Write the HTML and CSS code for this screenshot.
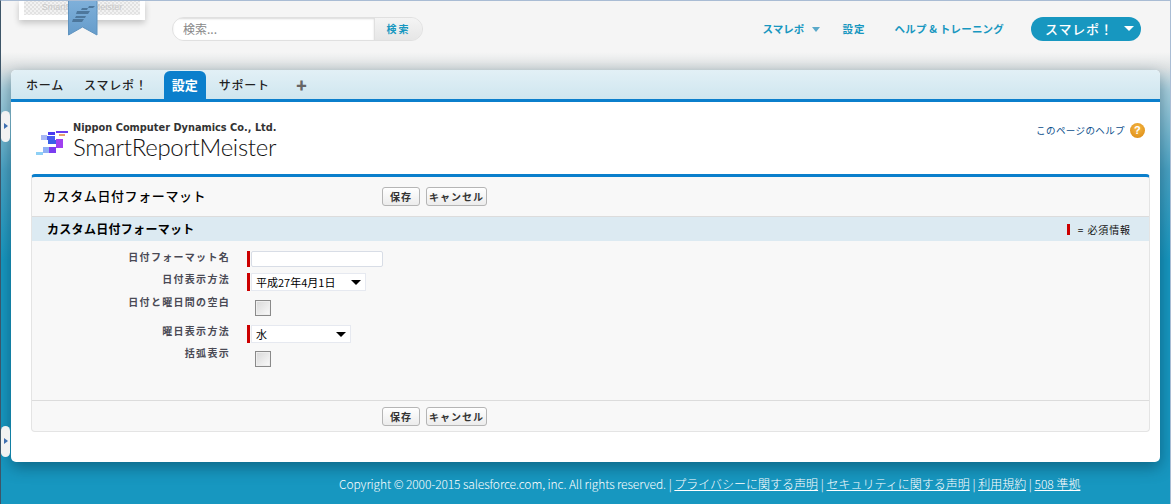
FILE: index.html
```html
<!DOCTYPE html>
<html lang="ja">
<head>
    <meta charset="UTF-8">
    <title>カスタム日付フォーマット</title>
    <link rel="stylesheet" href="styles.css">
</head>
<body>
    <header class="top">
        <div class="org-logo">
            <div class="org-card"><span>SmartReportMeister</span></div>
            <svg class="org-flag" width="30" height="36" viewBox="0 0 30 36">
                <defs>
                    <linearGradient id="flagFill" x1="0" y1="0" x2="0" y2="1">
                        <stop offset="0" stop-color="#7fb0da"/>
                        <stop offset="1" stop-color="#659ccb"/>
                    </linearGradient>
                </defs>
                <path d="M0.500 0V35L14.500 27L29 35V0Z" fill="url(#flagFill)" stroke="#5f93bf"/>
                <path d="M14 8H20L19 10H13ZM21 6H27L25 8H20ZM9 11H22L20 14H8ZM8 16H18L17 18H7ZM5 19H16L14 22H4Z" fill="#4d779c"/>
            </svg>
        </div>
        <form class="search">
            <input class="search-input" type="text" placeholder="検索...">
            <button class="search-btn" type="button">検索</button>
        </form>
        <nav class="top-links">
            <a href="#" class="link-smart">スマレポ <i class="caret"></i></a>
            <a href="#" class="link-setup">設定</a>
            <a href="#" class="link-help">ヘルプ &amp; トレーニング</a>
        </nav>
        <button class="app-menu" type="button"><span>スマレポ！</span><i class="caret caret-white"></i></button>
    </header>

    <!-- side handles -->
    <div class="handle handle-top"></div>
    <div class="handle handle-bottom"></div>

    <main class="panel">
        <nav class="tabs">
            <a href="#">ホーム</a>
            <a href="#">スマレポ！</a>
            <a href="#" class="active">設定</a>
            <a href="#">サポート</a>
            <a href="#" class="plus">✚</a>
        </nav>

        <div class="content">
            <div class="brand-row">
                <div class="brand">
                    <svg class="brand-mark" width="34" height="26" viewBox="0 0 34 26">
                        <rect x="12" y="2" width="7" height="3" fill="#4a3af0"/>
                        <rect x="20" y="1" width="12" height="2" fill="#6a3df0"/>
                        <rect x="23" y="4" width="6" height="2" fill="#e8a070"/>
                        <rect x="5" y="5" width="6" height="5" fill="#a8b8f5"/>
                        <rect x="11" y="6" width="8" height="4" fill="#4a5cf0"/>
                        <rect x="20" y="9" width="7" height="9" fill="#a040f0"/>
                        <rect x="12" y="10" width="8" height="4" fill="#3a60e8"/>
                        <rect x="7" y="17" width="6" height="6" fill="#8fb0f5"/>
                        <rect x="13" y="17" width="7" height="6" fill="#7a3df0"/>
                        <rect x="0" y="22" width="7" height="3" fill="#8ed0f5"/>
                    </svg>
                    <div class="brand-text">
                        <div class="brand-company">Nippon Computer Dynamics Co., Ltd.</div>
                        <div class="brand-name">SmartReportMeister</div>
                    </div>
                </div>
                <a href="#" class="page-help">このページのヘルプ <span class="help-icon">?</span></a>
            </div>

            <form class="edit-box">
                <div class="edit-head">
                    <h2>カスタム日付フォーマット</h2>
                    <div class="edit-btns">
                        <button type="button">保存</button>
                        <button type="button">キャンセル</button>
                    </div>
                </div>
                <div class="section-bar">
                    <h3>カスタム日付フォーマット</h3>
                    <span class="legend"><i class="req"></i>= 必須情報</span>
                </div>
                <div class="fields">
                    <div class="field">
                        <label>日付フォーマット名</label>
                        <i class="req"></i>
                        <input class="text-input" type="text">
                    </div>
                    <div class="field field-select">
                        <label>日付表示方法</label>
                        <i class="req"></i>
                        <div class="select select-date">平成27年4月1日</div>
                    </div>
                    <div class="field field-check">
                        <label>日付と曜日間の空白</label>
                        <span class="check"></span>
                    </div>
                    <div class="field field-select field-gap">
                        <label>曜日表示方法</label>
                        <i class="req"></i>
                        <div class="select select-day">水</div>
                    </div>
                    <div class="field field-check">
                        <label>括弧表示</label>
                        <span class="check"></span>
                    </div>
                </div>
                <div class="edit-foot">
                    <div class="edit-btns">
                        <button type="button">保存</button>
                        <button type="button">キャンセル</button>
                    </div>
                </div>
            </form>
        </div>
    </main>

    <footer class="foot">
        <span class="foot-copy">Copyright © 2000-2015 salesforce.com, inc. All rights reserved.</span> |
        <a href="#">プライバシーに関する声明</a> |
        <a href="#">セキュリティに関する声明</a> |
        <a href="#">利用規約</a> |
        <a href="#">508 準拠</a>
    </footer>
</body>
</html>
```

FILE: styles.css
```css
* {
    box-sizing: border-box;
}
html, body {
    height: 100%;
}
body {
    margin: 0;
    height: 504px;
    overflow: hidden;
    position: relative;
    font-family: "Liberation Sans", "Noto Sans CJK JP", sans-serif;
    font-size: 11px;
    color: #333;
    font-feature-settings: "palt";
    border-top: 1px solid #a9bcd4;
    border-left: 1px solid #3d5568;
    border-right: 1px solid #a9bcd4;
    background: linear-gradient(to bottom, #f5f5f5 0, #f5f5f5 52px, #dfe3e4 68px, #a9d0de 90px, #4aa3c4 170px, #1797c0 260px, #1797c0 100%);
}
a {
    text-decoration: none;
}

/* header */
.top {
    height: 68px;
    display: flex;
    align-items: flex-start;
    padding: 16px 29px 0 171px;
    position: relative;
}
.org-logo {
    position: absolute;
    left: 18px;
    top: -1px;
}
.org-card {
    width: 126px;
    height: 20px;
    background: #fff;
    padding: 0 5px 5px;
    box-shadow: 0 3px 6px rgba(0, 0, 0, 0.2);
}
.org-card span {
    display: block;
    height: 15px;
    background: repeating-conic-gradient(#e2e2e2 0 25%, #f2f2f2 0 50%) 0 0 / 4px 4px;
    color: #c8c8c8;
    font-size: 9px;
    line-height: 15px;
    text-align: center;
}
.org-flag {
    position: absolute;
    left: 49px;
    top: 0;
}
.search {
    display: flex;
    width: 251px;
    height: 24px;
    margin: 0;
    border: 1px solid #e0e0e0;
    border-radius: 12px;
    background: #eee;
    overflow: hidden;
}
.search-input {
    width: 202px;
    border: 0;
    border-right: 1px solid #e0e0e0;
    padding: 0 10px 2px;
    background: #fff;
    box-shadow: inset 0 1px 2px rgba(0, 0, 0, 0.15);
    font: 12px "Noto Sans CJK JP", sans-serif;
    outline: none;
}
.search-input::placeholder {
    color: #888;
}
.search-btn {
    flex: 1;
    border: 0;
    padding: 0 0 2px;
    background: linear-gradient(#f4f4f4, #e6e6e6);
    color: #1797c0;
    font: bold 10px "Noto Sans CJK JP", sans-serif;
    letter-spacing: 2px;
}
.top-links {
    margin-left: auto;
    display: flex;
    padding-top: 5px;
}
.top-links a {
    color: #1797c0;
    font: bold 10.500px/14px "Noto Sans CJK JP", sans-serif;
}
.link-smart {
    margin-right: 23px;
}
.link-setup {
    margin-right: 29px;
    letter-spacing: 1px;
}
.link-help {
    letter-spacing: 0.2px;
}
.caret {
    display: inline-block;
    margin-left: 5px;
    border: 4px solid transparent;
    border-top: 5px solid #5aa9c9;
    border-bottom: 0;
    vertical-align: 1px;
}
.app-menu {
    width: 110px;
    height: 24px;
    margin-left: 27px;
    padding: 0 7px 2px 14px;
    border: 0;
    border-radius: 12px;
    background: #1797c0;
    color: #fff;
    display: flex;
    align-items: center;
    justify-content: space-between;
    font: 500 13px "Noto Sans CJK JP", sans-serif;
    letter-spacing: 0.8px;
}
.caret-white {
    border-width: 5px 5px 0;
    border-top-color: #fff;
}

/* handles over the left edge */
.handle {
    position: absolute;
    left: 0;
    width: 9px;
    height: 31px;
    background: #f2f2f2;
    border-radius: 5px;
}
.handle::after {
    content: "";
    position: absolute;
    left: 3px;
    top: 12px;
    border: 3px solid transparent;
    border-left: 4px solid #3f6fb0;
    border-right: 0;
}
.handle-top {
    top: 110px;
}
.handle-bottom {
    top: 425px;
}

/* main panel */
.panel {
    margin: 1px 10px 0;
    height: 392px;
    background: #fff;
    border-radius: 5px;
    box-shadow: 0 5px 16px rgba(0, 40, 60, 0.45);
}
.tabs {
    height: 32px;
    display: flex;
    align-items: flex-end;
    padding-left: 8px;
    border-bottom: 3px solid #0b7fcc;
    border-radius: 5px 5px 0 0;
    background: linear-gradient(#e2f0f6, #cfe6ef);
}
.tabs a {
    height: 28px;
    padding: 0 7px;
    margin-right: 6px;
    color: #222;
    font: 500 12px/28px "Noto Sans CJK JP", sans-serif;
    letter-spacing: 0.8px;
}
.tabs a.active {
    margin-left: 3px;
    padding: 0 8px;
    background: #0b7fcc;
    border-radius: 6px 6px 0 0;
    color: #fff;
    font-size: 13px;
    font-weight: 700;
    letter-spacing: 0;
}
.tabs a.plus {
    margin-left: 6px;
    color: #666;
    font-size: 11px;
}
.content {
    padding: 0 10px 0 20px;
}
.brand-row {
    height: 72px;
    display: flex;
    justify-content: space-between;
    padding: 20px 5px 0 5px;
}
.brand {
    display: flex;
    align-items: flex-end;
    height: 38px;
}
.brand-mark {
    margin-right: 3px;
    margin-bottom: 4px;
}
.brand-company {
    font: bold 9.800px/12px "DejaVu Sans", sans-serif;
    color: #333;
}
.brand-name {
    font: 300 24px/26px "Lato", sans-serif;
    color: #111;
    letter-spacing: -0.3px;
}
.page-help {
    display: flex;
    align-items: center;
    gap: 5px;
    height: 16px;
    color: #0b4f8c;
    font: 9.500px "Noto Sans CJK JP", sans-serif;
    letter-spacing: 0.4px;
}
.help-icon {
    width: 15px;
    height: 15px;
    border-radius: 50%;
    background: radial-gradient(circle at 50% 35%, #f6b844, #d9860f);
    color: #fff;
    font: bold 11px/15px "Liberation Sans", sans-serif;
    text-align: center;
}

/* edit box */
.edit-box {
    height: 258px;
    margin: 0;
    background: #f8f8f8;
    border: 1px solid #e4e4e4;
    border-top: 3px solid #0b7fcc;
    border-radius: 4px;
    display: flex;
    flex-direction: column;
}
.edit-head {
    height: 40px;
    display: flex;
    align-items: center;
    border-bottom: 1px solid #dcdcdc;
    padding-left: 11px;
}
.edit-head h2 {
    width: 339px;
    margin: 0 0 3px;
    color: #000;
    font: 500 13px "Noto Sans CJK JP", sans-serif;
    letter-spacing: 0.6px;
}
.edit-btns {
    display: flex;
    gap: 6px;
}
.edit-btns button {
    height: 19px;
    padding: 0;
    border: 1px solid #b5b5b5;
    border-radius: 3px;
    background: linear-gradient(#fff, #ececec);
    color: #333;
    font: bold 10px "Noto Sans CJK JP", sans-serif;
    letter-spacing: 1px;
    white-space: nowrap;
}
.edit-btns button:first-child {
    width: 38px;
}
.edit-btns button:last-child {
    width: 61px;
}
.section-bar {
    height: 24px;
    display: flex;
    align-items: center;
    justify-content: space-between;
    padding: 0 18px 0 15px;
    background: #dceaf2;
}
.section-bar h3 {
    margin: 0 0 2px;
    color: #000;
    font: 700 12px "Noto Sans CJK JP", sans-serif;
    letter-spacing: 0.3px;
}
.legend {
    display: flex;
    align-items: center;
    color: #111;
    font: 10px "Noto Sans CJK JP", sans-serif;
    letter-spacing: 0.9px;
}
.legend .req {
    margin-right: 8px;
}
.req {
    display: block;
    flex: none;
    width: 3px;
    height: 11px;
    background: #c00;
}
.fields {
    flex: 1;
    padding-top: 10px;
}
.field {
    display: flex;
    align-items: flex-start;
    margin-bottom: 6px;
}
.field label {
    width: 198px;
    margin-right: 17px;
    color: #4a4a55;
    text-align: right;
    font: bold 10px/12px "Noto Sans CJK JP", sans-serif;
    letter-spacing: 1.3px;
}
.field .req {
    height: 16px;
}
.field-select .req {
    height: 18px;
}
.text-input {
    width: 132px;
    height: 16px;
    margin-left: 1px;
    padding: 0 3px;
    border: 1px solid #d8dde6;
    border-radius: 2px;
    background: #fff;
    outline: none;
}
.select {
    position: relative;
    height: 18px;
    margin-left: 1px;
    padding-left: 4px;
    border: 1px solid #e6e9f0;
    background: #fff;
    color: #000;
    font: 11px/17px "Noto Sans CJK JP", sans-serif;
}
.select::after {
    content: "";
    position: absolute;
    right: 4px;
    top: 6px;
    border: 5px solid transparent;
    border-top: 5px solid #000;
    border-bottom: 0;
}
.select-date {
    width: 115px;
}
.select-day {
    width: 100px;
}
.field-check {
    margin-bottom: 9px;
    margin-top: -1px;
}
.check {
    width: 16px;
    height: 16px;
    margin: 4px 0 0 8px;
    border: 1px solid #8a8a8a;
    background: linear-gradient(135deg, #d8d8d8, #fafafa);
    box-shadow: inset 0 0 0 1px #eee;
}
.field-gap {
    margin-bottom: 5px;
}
.edit-foot {
    height: 31px;
    padding: 6px 0 0 350px;
    border-top: 1px solid #dcdcdc;
}

.foot {
    margin-top: 14px;
    padding-left: 338px;
    color: #fff;
    font: 300 12px/16px "Noto Sans CJK JP", sans-serif;
    white-space: nowrap;
}
.foot-copy {
    letter-spacing: -0.1px;
}
.foot a {
    color: #fff;
    text-decoration: underline;
}
```
